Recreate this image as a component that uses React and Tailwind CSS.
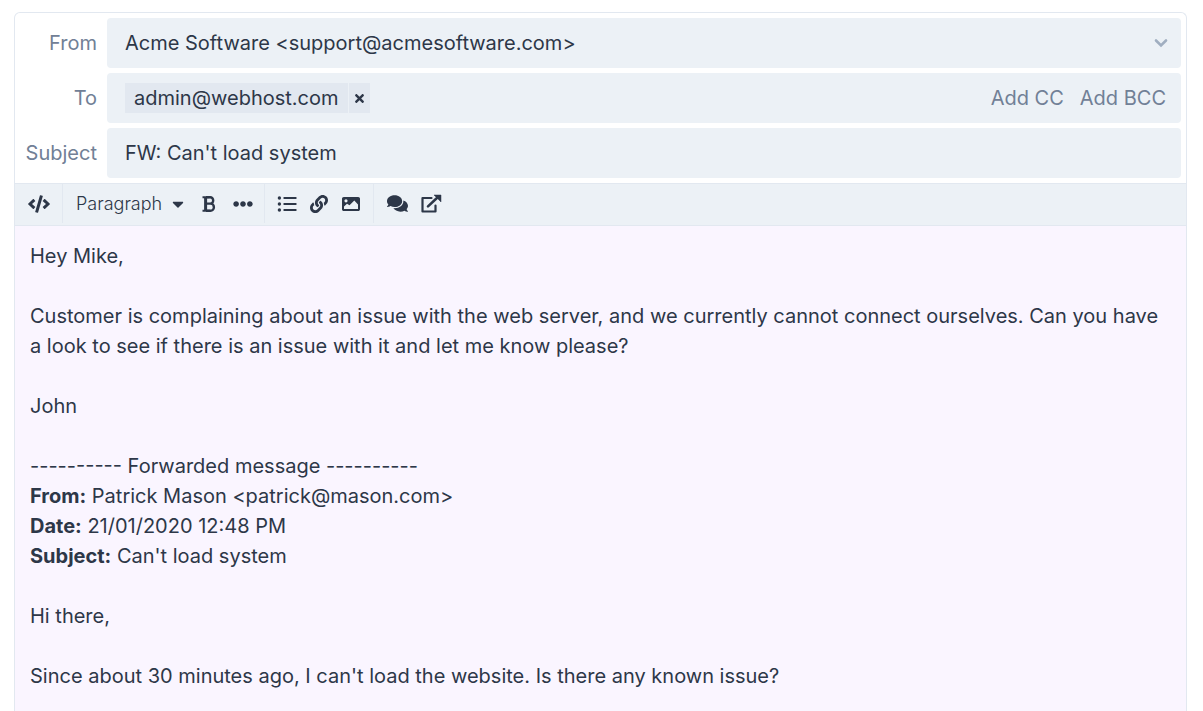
import React, { useState } from "react";
import {
  FaCode,
  FaCaretDown,
  FaEllipsisH,
  FaLink,
  FaComments,
  FaTimes,
} from "react-icons/fa";

function BoldIcon() {
  return (
    <svg viewBox="0 0 14 16" className="h-4 w-[14px]" fill="none" stroke="currentColor" aria-hidden="true">
      <path d="M0.5 1.2H7.5M0.5 14.8H8" strokeWidth="2" />
      <path d="M3.6 1v14" strokeWidth="3" />
      <path d="M4 1.2h4.2a3 3.2 0 0 1 0 6.4H4M8 7.6h0.5a3.4 3.6 0 0 1 0 7.2H4" strokeWidth="2.4" />
    </svg>
  );
}

function ListIcon() {
  return (
    <svg viewBox="0 0 20 18" className="h-[18px] w-5" fill="currentColor" aria-hidden="true">
      <circle cx="2.4" cy="3" r="1.7" />
      <circle cx="2.4" cy="9" r="1.7" />
      <circle cx="2.4" cy="15" r="1.7" />
      <rect x="6.5" y="2" width="13" height="2" rx="0.5" />
      <rect x="6.5" y="8" width="13" height="2" rx="0.5" />
      <rect x="6.5" y="14" width="13" height="2" rx="0.5" />
    </svg>
  );
}

function ImageIcon() {
  return (
    <svg viewBox="0 0 20 18" className="h-[18px] w-5" fill="currentColor" aria-hidden="true">
      <path
        fillRule="evenodd"
        d="M2.8 2h14.4C18.2 2 19 2.8 19 3.8v10.4c0 1-.8 1.8-1.8 1.8H2.8C1.8 16 1 15.2 1 14.2V3.8C1 2.8 1.8 2 2.8 2zM5 4.200a1.600 1.600 0 1 0 0 3.200a1.600 1.600 0 1 0 0-3.200zM3 14V11.500l3-2.800 2.500 1.500L13.300 5.500 17 9.500V14z"
      />
    </svg>
  );
}

function ExternalIcon() {
  return (
    <svg viewBox="0 0 22 20" className="h-5 w-[22px]" aria-hidden="true">
      <path
        d="M11.5 4H2.500v13.500h13v-6"
        fill="none"
        stroke="currentColor"
        strokeWidth="2.2"
        strokeLinejoin="round"
        strokeLinecap="round"
      />
      <path d="M8 12.400L18 3" fill="none" stroke="currentColor" strokeWidth="2.6" strokeLinecap="round" />
      <path d="M14 1h7v7z" fill="currentColor" stroke="currentColor" strokeWidth="0.5" strokeLinejoin="round" />
    </svg>
  );
}

function Field({ label, id, children }) {
  return (
    <div className="flex items-center">
      <label htmlFor={id} className="w-[92px] shrink-0 pr-[10px] text-right text-[#718096]">
        {label}
      </label>
      <div className="flex h-[50px] min-w-0 flex-1 items-center rounded bg-[#ecf1f6]">{children}</div>
    </div>
  );
}

function Tool({ label, className, children }) {
  return (
    <button type="button" aria-label={label} className={`flex h-8 items-center justify-center ${className}`}>
      {children}
    </button>
  );
}

export default function App() {
  const [recipients, setRecipients] = useState(["admin@webhost.com"]);
  const [subject, setSubject] = useState("FW: Can't load system");

  return (
    <main className="h-screen overflow-hidden bg-white pt-3 pr-4 pl-[14px] font-['Inter',sans-serif] text-xl leading-[30px] font-normal text-[#2d3748]">
      <form className="flex h-full flex-col rounded-t-md border border-b-0 border-[#e2e8f0]">
        <div className="flex flex-col gap-[5px] py-[5px] pr-[5px]">
          <Field label="From" id="from">
            <div className="relative w-full">
              <select id="from" className="h-[50px] w-full appearance-none bg-transparent pr-10 pl-[18px] outline-none">
                <option>Acme Software &lt;support@acmesoftware.com&gt;</option>
              </select>
              <svg
                viewBox="0 0 14 10"
                className="pointer-events-none absolute top-5 right-[13px] h-[10px] w-[14px] text-[#a0aec0]"
                fill="none"
                stroke="currentColor"
                strokeWidth="2.6"
                strokeLinecap="round"
                aria-hidden="true"
              >
                <path d="M2 2.5l5 5 5-5" />
              </svg>
            </div>
          </Field>
          <Field label="To" id="to">
            <div className="flex w-full items-center pr-[15px] pl-[18px]">
              {recipients.map((email) => (
                <span key={email} className="flex h-[30px] gap-px">
                  <span className="bg-[#e2e8f0] px-[9px]">{email}</span>
                  <button
                    type="button"
                    aria-label={`Remove ${email}`}
                    onClick={() => setRecipients(recipients.filter((r) => r !== email))}
                    className="flex w-[21px] items-center justify-center bg-[#e2e8f0]"
                  >
                    <FaTimes className="size-[13px]" />
                  </button>
                </span>
              ))}
              <input id="to" type="text" className="min-w-0 flex-1 bg-transparent outline-none" />
              <span className="flex gap-4 text-[#718096]">
                <button type="button">Add CC</button>
                <button type="button">Add BCC</button>
              </span>
            </div>
          </Field>
          <Field label="Subject" id="subject">
            <input
              id="subject"
              type="text"
              value={subject}
              onChange={(e) => setSubject(e.target.value)}
              className="h-[50px] w-full bg-transparent px-[18px] outline-none"
            />
          </Field>
        </div>

        <div role="toolbar" aria-label="Formatting" className="flex border-y border-[#e2e8f0] bg-[#ecf1f6] pb-0.5">
          <div className="flex h-[39px] items-center border-r border-[#e2e8f0] px-3">
            <Tool label="Source code" className="w-[23px]">
              <FaCode className="size-[22px]" />
            </Tool>
          </div>
          <div className="flex h-[39px] items-center border-r border-[#e2e8f0] pr-[9px] pl-[13px]">
            <button type="button" className="flex items-center gap-[7px] text-lg font-light">
              Paragraph
              <FaCaretDown className="size-[18px]" />
            </button>
            <Tool label="Bold" className="ml-2 w-7">
              <BoldIcon />
            </Tool>
            <Tool label="More" className="ml-2 w-6">
              <FaEllipsisH className="size-5" />
            </Tool>
          </div>
          <div className="flex h-[39px] items-center gap-3 border-r border-[#e2e8f0] px-3">
            <Tool label="Bulleted list" className="w-5">
              <ListIcon />
            </Tool>
            <Tool label="Link" className="w-5">
              <FaLink className="size-[18px]" />
            </Tool>
            <Tool label="Image" className="w-5">
              <ImageIcon />
            </Tool>
          </div>
          <div className="flex h-[39px] items-center gap-3 px-3">
            <Tool label="Canned replies" className="w-[22px]">
              <FaComments className="size-[21px]" />
            </Tool>
            <Tool label="Insert article" className="w-[22px]">
              <ExternalIcon />
            </Tool>
          </div>
        </div>

        <div
          role="textbox"
          aria-multiline="true"
          aria-label="Message"
          tabIndex={0}
          className="flex flex-1 flex-col gap-[30px] overflow-hidden bg-[#faf5ff] p-[15px] outline-none"
        >
          <p>Hey Mike,</p>
          <p>
            Customer is complaining about an issue with the web server, and we currently cannot connect ourselves. Can
            you have a look to see if there is an issue with it and let me know please?
          </p>
          <p>John</p>
          <p>
            ---------- Forwarded message ----------
            <br />
            <b className="font-bold">From:</b> Patrick Mason &lt;patrick@mason.com&gt;
            <br />
            <b className="font-bold">Date:</b> 21/01/2020 12:48 PM
            <br />
            <b className="font-bold">Subject:</b> Can't load system
          </p>
          <p>Hi there,</p>
          <p>Since about 30 minutes ago, I can't load the website. Is there any known issue?</p>
        </div>
      </form>
    </main>
  );
}
